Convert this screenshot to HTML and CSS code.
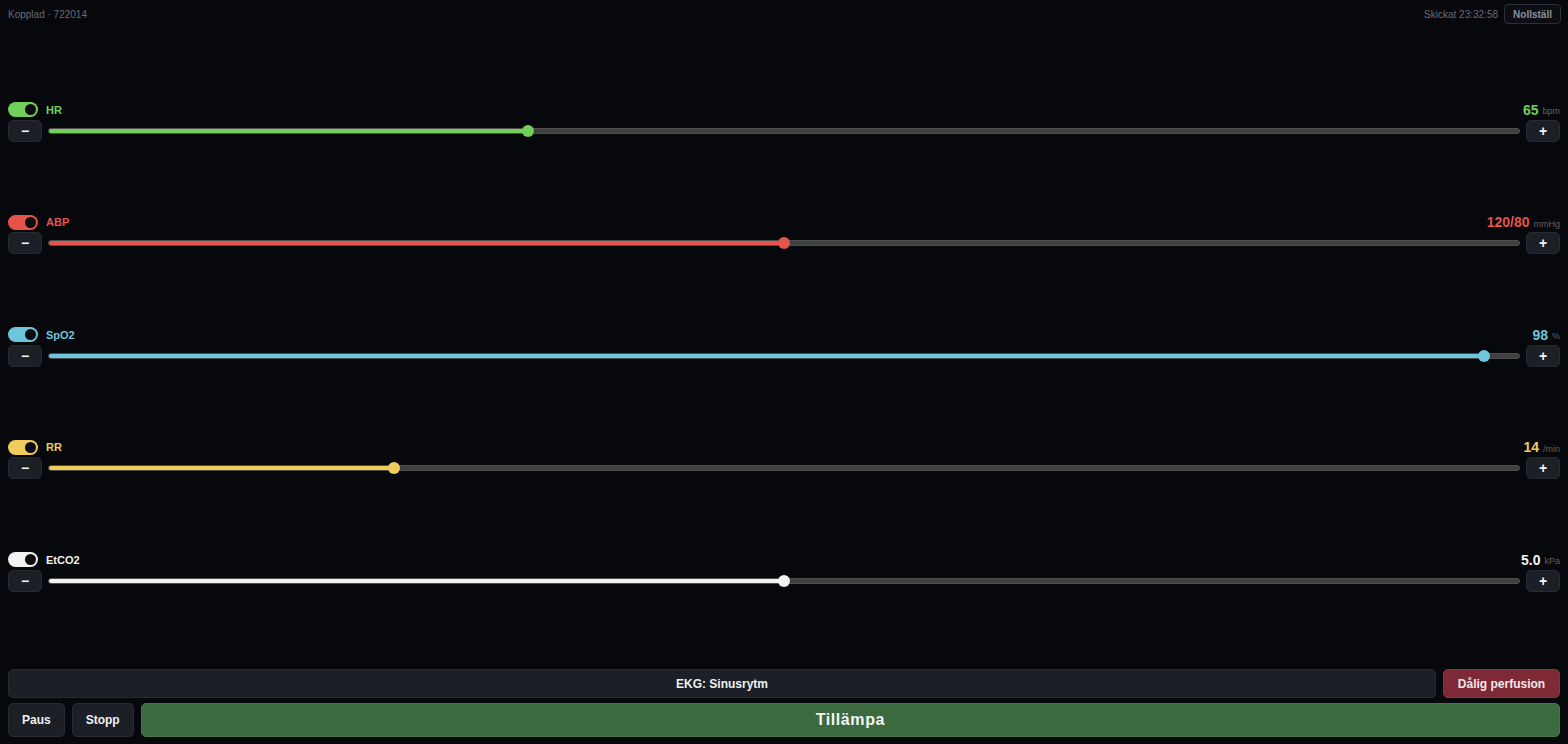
FILE: index.html
```html
<!DOCTYPE html>
<html lang="sv">
<head>
<meta charset="utf-8">
<title>Kontroll</title>
<link rel="stylesheet" href="styles.css">
</head>
<body>
<div class="app">
  <header class="top">
    <span class="status">Kopplad · 722014</span>
    <div class="top-right">
      <span class="status">Skickat 23:32:58</span>
      <button class="reset">Nollställ</button>
    </div>
  </header>
  <main class="params">
    <section class="param hr">
      <div class="head">
        <span class="toggle"><span class="knob"></span></span>
        <span class="label">HR</span>
        <span class="value">65</span><span class="unit">bpm</span>
      </div>
      <div class="ctrl">
        <button class="step">−</button>
        <div class="track"><div class="fill" style="width:32.6%"><span class="thumb"></span></div></div>
        <button class="step">+</button>
      </div>
    </section>
    <section class="param abp">
      <div class="head">
        <span class="toggle"><span class="knob"></span></span>
        <span class="label">ABP</span>
        <span class="value">120/80</span><span class="unit">mmHg</span>
      </div>
      <div class="ctrl">
        <button class="step">−</button>
        <div class="track"><div class="fill" style="width:50%"><span class="thumb"></span></div></div>
        <button class="step">+</button>
      </div>
    </section>
    <section class="param spo2">
      <div class="head">
        <span class="toggle"><span class="knob"></span></span>
        <span class="label">SpO2</span>
        <span class="value">98</span><span class="unit">%</span>
      </div>
      <div class="ctrl">
        <button class="step">−</button>
        <div class="track"><div class="fill" style="width:97.6%"><span class="thumb"></span></div></div>
        <button class="step">+</button>
      </div>
    </section>
    <section class="param rr">
      <div class="head">
        <span class="toggle"><span class="knob"></span></span>
        <span class="label">RR</span>
        <span class="value">14</span><span class="unit">/min</span>
      </div>
      <div class="ctrl">
        <button class="step">−</button>
        <div class="track"><div class="fill" style="width:23.5%"><span class="thumb"></span></div></div>
        <button class="step">+</button>
      </div>
    </section>
    <section class="param etco2">
      <div class="head">
        <span class="toggle"><span class="knob"></span></span>
        <span class="label">EtCO2</span>
        <span class="value">5.0</span><span class="unit">kPa</span>
      </div>
      <div class="ctrl">
        <button class="step">−</button>
        <div class="track"><div class="fill" style="width:50%"><span class="thumb"></span></div></div>
        <button class="step">+</button>
      </div>
    </section>
  </main>
  <footer class="bottom">
    <div class="row1">
      <div class="ekg">EKG: Sinusrytm</div>
      <button class="perf">Dålig perfusion</button>
    </div>
    <div class="row2">
      <button class="btn">Paus</button>
      <button class="btn">Stopp</button>
      <button class="apply">Tillämpa</button>
    </div>
  </footer>
</div>
</body>
</html>
```
FILE: styles.css
```css
* { box-sizing: border-box; }
html, body { margin: 0; height: 100%; }
body {
  background: #07080c;
  color: #e8eaee;
  font-family: "Liberation Sans", Arial, sans-serif;
}
button { font-family: inherit; cursor: pointer; }
.app {
  height: 100vh;
  display: flex;
  flex-direction: column;
  padding: 4px 8px 7px 8px;
}
.top {
  height: 20px;
  display: flex;
  justify-content: space-between;
  align-items: center;
}
.status { font-size: 10px; color: #676b73; }
.top-right { display: flex; align-items: center; gap: 6px; }
.reset {
  height: 20px;
  width: 57px;
  margin-right: -1px;
  background: #0c0e13;
  border: 1px solid #2c3038;
  border-radius: 4px;
  color: #8b9099;
  font-size: 10px;
  font-weight: bold;
  padding: 0;
}
.params {
  flex: 1;
  display: flex;
  flex-direction: column;
  justify-content: space-evenly;
  padding-top: 5px;
}
.param { display: flex; flex-direction: column; gap: 2px; }
.head {
  height: 16px;
  display: flex;
  align-items: center;
}
.toggle {
  width: 30px;
  height: 15px;
  border-radius: 8px;
  background: var(--c);
  display: flex;
  align-items: center;
  justify-content: flex-end;
  padding-right: 2px;
}
.knob {
  width: 11px;
  height: 11px;
  border-radius: 50%;
  background: #0b0c10;
}
.label {
  margin-left: 8px;
  font-size: 11px;
  font-weight: bold;
  color: var(--c);
}
.value {
  margin-left: auto;
  font-size: 14px;
  font-weight: bold;
  color: var(--c);
}
.unit {
  margin-left: 4px;
  font-size: 9px;
  color: #5d626b;
  padding-top: 3px;
}
.ctrl {
  height: 22px;
  display: flex;
  align-items: center;
  gap: 6px;
}
.step {
  width: 34px;
  height: 22px;
  background: #1c1f26;
  border: 1px solid #272b33;
  border-radius: 5px;
  color: #f2f3f5;
  font-size: 14px;
  font-weight: bold;
  padding: 0;
  line-height: 1;
}
.track {
  flex: 1;
  height: 6px;
  border-radius: 3px;
  background: #3f3f3f;
  border: 1px solid #4d4d4d;
  display: flex;
  align-items: center;
}
.fill {
  height: 4px;
  border-radius: 2px 0 0 2px;
  background: var(--c);
  position: relative;
}
.thumb {
  position: absolute;
  right: -6px;
  top: -4px;
  width: 12px;
  height: 12px;
  border-radius: 50%;
  background: var(--c);
}
.hr { --c: #72cf59; }
.abp { --c: #e5534b; }
.spo2 { --c: #6ec6dc; }
.rr { --c: #f0cc5a; }
.etco2 { --c: #f2f2f2; }
.bottom { display: flex; flex-direction: column; gap: 5px; margin-top: 5px; }
.row1 { display: flex; gap: 7px; height: 29px; }
.ekg {
  flex: 1;
  background: #1c1f26;
  border: 1px solid #262a31;
  border-radius: 5px;
  display: flex;
  align-items: center;
  justify-content: center;
  font-size: 12px;
  font-weight: bold;
  color: #eef0f3;
}
.perf {
  width: 117px;
  background: #7d2a36;
  border: 1px solid #8a3340;
  border-radius: 5px;
  color: #f3e6e8;
  font-size: 12px;
  font-weight: bold;
  padding: 0;
}
.row2 { display: flex; gap: 7px; height: 34px; }
.btn {
  background: #1c1f26;
  border: 1px solid #262a31;
  border-radius: 5px;
  color: #eef0f3;
  font-size: 12px;
  font-weight: bold;
  padding: 0 13px;
}
.apply {
  flex: 1;
  background: #3b6a3f;
  border: 1px solid #457548;
  border-radius: 5px;
  color: #f2f5f2;
  font-size: 16px;
  font-weight: bold;
  letter-spacing: 0.6px;
}
```
